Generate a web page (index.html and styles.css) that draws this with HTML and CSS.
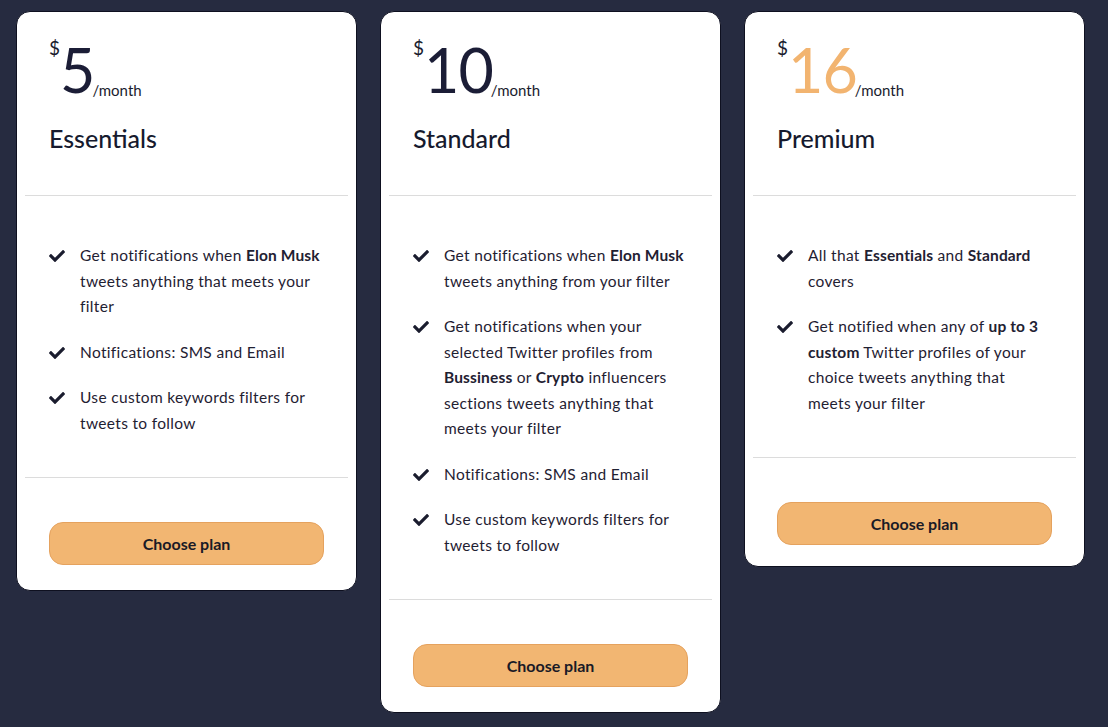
FILE: index.html
```html
<!DOCTYPE html>
<html>
<head>
<meta charset="utf-8">
<link rel="stylesheet" href="styles.css">
</head>
<body>
<main class="plans">
  <section class="card">
    <header class="card-head">
      <div class="price"><span class="cur">$</span><span class="amount">5</span><span class="per">/month</span></div>
      <h2 class="name">Essentials</h2>
    </header>
    <ul class="features">
      <li><svg class="check" viewBox="0 0 512 512"><path d="M173.9 439.4l-166.4-166.4c-10-10-10-26.2 0-36.2l36.2-36.2c10-10 26.2-10 36.2 0L192 312.7 432.1 72.6c10-10 26.2-10 36.2 0l36.2 36.2c10 10 10 26.2 0 36.2l-294.4 294.4c-10 10-26.2 10-36.2 0z"/></svg><span>Get notifications when <b>Elon Musk</b> tweets anything that meets your filter</span></li>
      <li><svg class="check" viewBox="0 0 512 512"><path d="M173.9 439.4l-166.4-166.4c-10-10-10-26.2 0-36.2l36.2-36.2c10-10 26.2-10 36.2 0L192 312.7 432.1 72.6c10-10 26.2-10 36.2 0l36.2 36.2c10 10 10 26.2 0 36.2l-294.4 294.4c-10 10-26.2 10-36.2 0z"/></svg><span>Notifications: SMS and Email</span></li>
      <li><svg class="check" viewBox="0 0 512 512"><path d="M173.9 439.4l-166.4-166.4c-10-10-10-26.2 0-36.2l36.2-36.2c10-10 26.2-10 36.2 0L192 312.7 432.1 72.6c10-10 26.2-10 36.2 0l36.2 36.2c10 10 10 26.2 0 36.2l-294.4 294.4c-10 10-26.2 10-36.2 0z"/></svg><span>Use custom keywords filters for tweets to follow</span></li>
    </ul>
    <footer class="card-foot"><button class="choose">Choose plan</button></footer>
  </section>

  <section class="card">
    <header class="card-head">
      <div class="price"><span class="cur">$</span><span class="amount">10</span><span class="per">/month</span></div>
      <h2 class="name">Standard</h2>
    </header>
    <ul class="features">
      <li><svg class="check" viewBox="0 0 512 512"><path d="M173.9 439.4l-166.4-166.4c-10-10-10-26.2 0-36.2l36.2-36.2c10-10 26.2-10 36.2 0L192 312.7 432.1 72.6c10-10 26.2-10 36.2 0l36.2 36.2c10 10 10 26.2 0 36.2l-294.4 294.4c-10 10-26.2 10-36.2 0z"/></svg><span>Get notifications when <b>Elon Musk</b> tweets anything from your filter</span></li>
      <li><svg class="check" viewBox="0 0 512 512"><path d="M173.9 439.4l-166.4-166.4c-10-10-10-26.2 0-36.2l36.2-36.2c10-10 26.2-10 36.2 0L192 312.7 432.1 72.6c10-10 26.2-10 36.2 0l36.2 36.2c10 10 10 26.2 0 36.2l-294.4 294.4c-10 10-26.2 10-36.2 0z"/></svg><span>Get notifications when your selected Twitter profiles from <b>Bussiness</b> or <b>Crypto</b> influencers sections tweets anything that meets your filter</span></li>
      <li><svg class="check" viewBox="0 0 512 512"><path d="M173.9 439.4l-166.4-166.4c-10-10-10-26.2 0-36.2l36.2-36.2c10-10 26.2-10 36.2 0L192 312.7 432.1 72.6c10-10 26.2-10 36.2 0l36.2 36.2c10 10 10 26.2 0 36.2l-294.4 294.4c-10 10-26.2 10-36.2 0z"/></svg><span>Notifications: SMS and Email</span></li>
      <li><svg class="check" viewBox="0 0 512 512"><path d="M173.9 439.4l-166.4-166.4c-10-10-10-26.2 0-36.2l36.2-36.2c10-10 26.2-10 36.2 0L192 312.7 432.1 72.6c10-10 26.2-10 36.2 0l36.2 36.2c10 10 10 26.2 0 36.2l-294.4 294.4c-10 10-26.2 10-36.2 0z"/></svg><span>Use custom keywords filters for tweets to follow</span></li>
    </ul>
    <footer class="card-foot"><button class="choose">Choose plan</button></footer>
  </section>

  <section class="card">
    <header class="card-head">
      <div class="price"><span class="cur">$</span><span class="amount accent">16</span><span class="per">/month</span></div>
      <h2 class="name">Premium</h2>
    </header>
    <ul class="features">
      <li><svg class="check" viewBox="0 0 512 512"><path d="M173.9 439.4l-166.4-166.4c-10-10-10-26.2 0-36.2l36.2-36.2c10-10 26.2-10 36.2 0L192 312.7 432.1 72.6c10-10 26.2-10 36.2 0l36.2 36.2c10 10 10 26.2 0 36.2l-294.4 294.4c-10 10-26.2 10-36.2 0z"/></svg><span>All that <b>Essentials</b> and <b>Standard</b> covers</span></li>
      <li><svg class="check" viewBox="0 0 512 512"><path d="M173.9 439.4l-166.4-166.4c-10-10-10-26.2 0-36.2l36.2-36.2c10-10 26.2-10 36.2 0L192 312.7 432.1 72.6c10-10 26.2-10 36.2 0l36.2 36.2c10 10 10 26.2 0 36.2l-294.4 294.4c-10 10-26.2 10-36.2 0z"/></svg><span>Get notified when any of <b>up to 3 custom</b> Twitter profiles of your choice tweets anything that meets your filter</span></li>
    </ul>
    <footer class="card-foot card-foot-tight"><button class="choose">Choose plan</button></footer>
  </section>
</main>
</body>
</html>
```

FILE: styles.css
```css
* { box-sizing: border-box; }

html, body {
  margin: 0;
  padding: 0;
  background: #262b40;
  height: 100%;
}

body {
  font-family: "Lato", "Open Sans", sans-serif;
  color: #1a1c2e;
}

.plans {
  display: flex;
  align-items: flex-start;
  gap: 23px;
  padding: 11px 23px 0 16px;
}

.card {
  width: 341px;
  background: #fff;
  border: 1px solid #0e1020;
  border-radius: 14px;
  padding: 0 8px;
}

.card-head {
  padding: 26px 24px 42px;
  border-bottom: 1px solid #dcdcdc;
}

.price {
  display: flex;
  align-items: flex-start;
  height: 62px;
}

.cur {
  font-size: 19px;
  line-height: 1;
  margin-right: 0;
}

.amount {
  font-size: 61px;
  line-height: 1;
  margin-top: 1px;
  color: #1b1d36;
  letter-spacing: -1px;
}

.amount.accent { color: #f2b470; }

.per {
  font-size: 15px;
  line-height: 18px;
  align-self: flex-end;
  margin-bottom: 1px;
  margin-left: -2px;
}

.name {
  margin: 23px 0 0;
  font-size: 25px;
  font-weight: 500;
  line-height: 30px;
  color: #161a2e;
}

.features {
  list-style: none;
  margin: 0;
  padding: 47px 25.5px 41px 24px;
  border-bottom: 1px solid #dcdcdc;
  display: flex;
  flex-direction: column;
  gap: 20px;
}

.features li {
  display: flex;
  align-items: flex-start;
  gap: 15px;
  font-size: 15.5px;
  line-height: 25.5px;
  letter-spacing: 0.33px;
  color: #1f2132;
}

.features b {
  font-weight: 700;
  letter-spacing: 0.15px;
}

.check {
  flex: none;
  width: 16px;
  height: 16px;
  margin-top: 5px;
  fill: #1a1c2e;
}

.card-foot {
  padding: 44px 24px 25px;
}

.card-foot-tight {
  padding-bottom: 21px;
}

.choose {
  display: block;
  width: 100%;
  height: 43px;
  border-radius: 14px;
  border: 1px solid #e5a25e;
  background: #f2b672;
  font-family: inherit;
  font-size: 16px;
  font-weight: 700;
  color: #1a1a26;
  cursor: pointer;
}
```
